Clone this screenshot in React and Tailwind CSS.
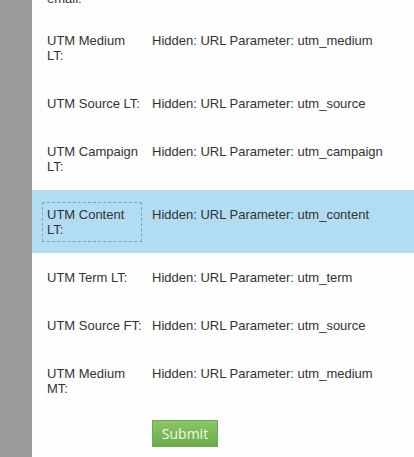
import React from "react";

const rows = [
  { label: ["UTM Medium", "LT:"], value: "utm_medium" },
  { label: ["UTM Source LT:"], value: "utm_source" },
  { label: ["UTM Campaign", "LT:"], value: "utm_campaign" },
  { label: ["UTM Content", "LT:"], value: "utm_content", selected: true },
  { label: ["UTM Term LT:"], value: "utm_term" },
  { label: ["UTM Source FT:"], value: "utm_source" },
  { label: ["UTM Medium", "MT:"], value: "utm_medium" },
];

function Row({ label, value, selected }) {
  return (
    <div
      className={
        "flex items-start pl-[10px] pt-3 pb-[11px] " +
        (selected ? "bg-[#b1dcf2]" : "")
      }
    >
      <div
        className={
          "w-[100px] shrink-0 p-1 border whitespace-nowrap " +
          (selected ? "border-dashed border-[#8a9eab]" : "border-transparent")
        }
      >
        {label.map((l, i) => (
          <div key={i}>{l}</div>
        ))}
      </div>
      <div className="ml-[10px] pt-[5px] whitespace-nowrap">
        Hidden: URL Parameter: {value}
      </div>
    </div>
  );
}

export default function App() {
  return (
    <div
      className="flex h-[457px] w-[414px] overflow-hidden bg-white text-[13px] leading-[15px] text-[#333333]"
      style={{ fontFamily: '"Liberation Sans", Arial, sans-serif' }}
    >
      <div className="w-[32px] shrink-0 bg-[#9b9b9b]" />
      <div className="flex-1 bg-[#fefefe]">
        <div className="-mt-[9px] pb-[10px] pl-[15px]">email:</div>
        {rows.map((r, i) => (
          <Row key={i} {...r} />
        ))}
        <div className="pl-[120px] pt-[8px]">
          <button
            className="h-[27px] w-[66px] border border-[#6ea84f] bg-gradient-to-b from-[#8cc66a] to-[#6aab48] text-[14px] text-[#f2fbe9]"
            style={{ fontFamily: '"Open Sans", "Liberation Sans", sans-serif' }}
          >
            Submit
          </button>
        </div>
      </div>
    </div>
  );
}
